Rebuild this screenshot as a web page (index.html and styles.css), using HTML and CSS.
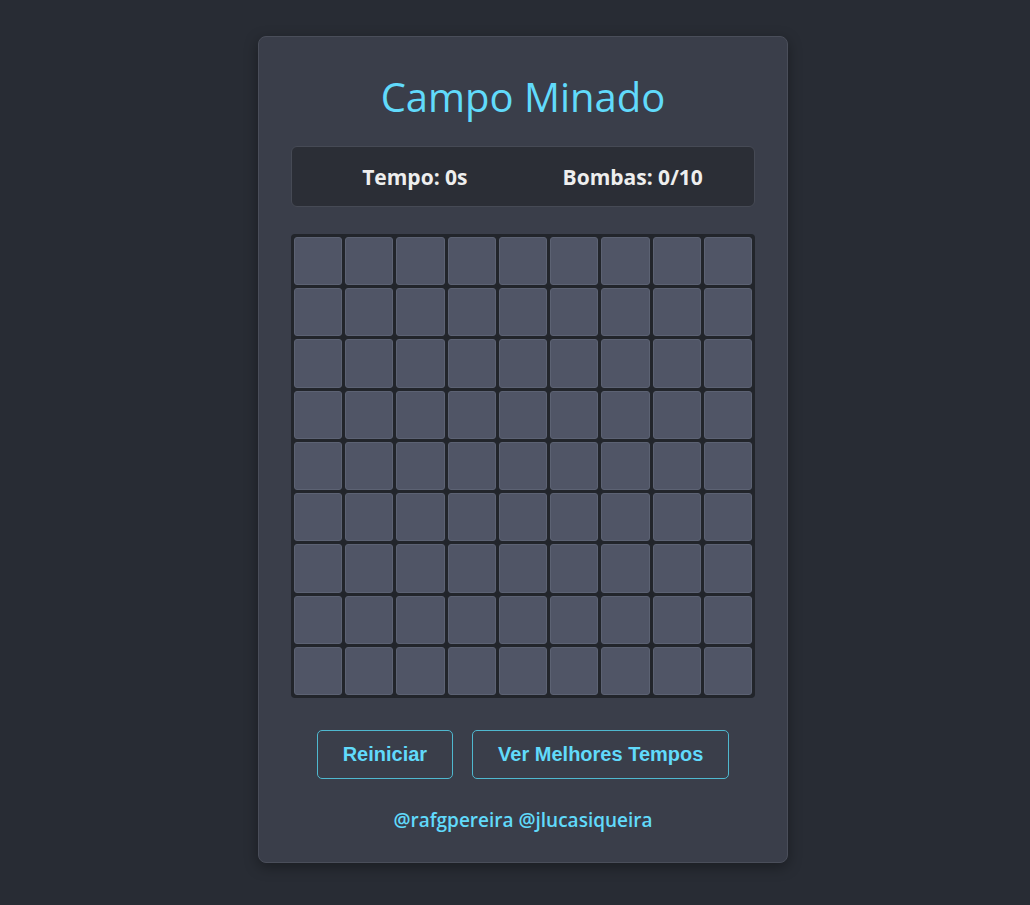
FILE: index.html
```html
<!DOCTYPE html>
<html lang="pt-BR">
<head>
    <meta charset="UTF-8">
    <meta name="viewport" content="width=device-width, initial-scale=1.0">
    <title>Campo Minado</title>
    <link rel="stylesheet" href="styles.css">
</head>
<body>
    <div class="game">
        <h1 class="title">Campo Minado</h1>
        <div class="info">
            <span class="timer">Tempo: 0s</span>
            <span class="bombs">Bombas: 0/10</span>
        </div>
        <div class="board" id="board"></div>
        <div class="actions">
            <button class="btn">Reiniciar</button>
            <button class="btn">Ver Melhores Tempos</button>
        </div>
        <p class="credits">@rafgpereira @jlucasiqueira</p>
    </div>
    <script>
        const board = document.getElementById("board");
        for (let i = 0; i < 81; i++) {
            const cell = document.createElement("div");
            cell.className = "cell";
            board.appendChild(cell);
        }
    </script>
</body>
</html>
```

FILE: styles.css
```css
*{
    padding: 0;
    margin: 0;
    box-sizing: border-box;
}
body{
    background-color: #282c34;
    font-family: "Segoe UI", "Open Sans", sans-serif;
    display: flex;
    justify-content: center;
    align-items: flex-start;
    padding: 36px 0 0 16px;
    min-height: 100vh;
}
.game{
    width: 530px;
    background-color: #3a3e4a;
    border: 1px solid #4a4e5a;
    border-radius: 8px;
    padding: 30px 32px 30px 32px;
    box-shadow: 0 4px 14px rgba(0, 0, 0, 0.35);
}
.title{
    text-align: center;
    color: #61dafb;
    font-size: 40px;
    font-weight: 500;
    line-height: 60px;
}
.info{
    margin-top: 19px;
    height: 61px;
    display: flex;
    align-items: center;
    justify-content: center;
    gap: 95px;
    padding-left: 19px;
    background-color: #2b2e36;
    border: 1px solid #464a55;
    border-radius: 6px;
    color: #eeeeee;
    font-size: 21px;
    font-weight: 700;
}
.board{
    margin-top: 27px;
    display: grid;
    grid-template-columns: repeat(9, 1fr);
    gap: 3px;
    padding: 3px;
    background-color: #22252b;
    border-radius: 4px;
}
.cell{
    aspect-ratio: 1;
    background-color: #505566;
    border: 1px solid #5c6273;
    border-radius: 3px;
}
.actions{
    margin-top: 32px;
    display: flex;
    justify-content: center;
    gap: 19px;
}
.btn{
    background: transparent;
    border: 1px solid #4fb8cf;
    border-radius: 5px;
    color: #61dafb;
    font-family: "Liberation Sans", Arial, sans-serif;
    font-size: 20px;
    font-weight: 700;
    line-height: 23px;
    padding: 12px 25px;
    cursor: pointer;
}
.credits{
    margin-top: 29px;
    text-align: center;
    color: #61dafb;
    font-size: 19px;
    font-weight: 600;
    line-height: 24px;
}
```
